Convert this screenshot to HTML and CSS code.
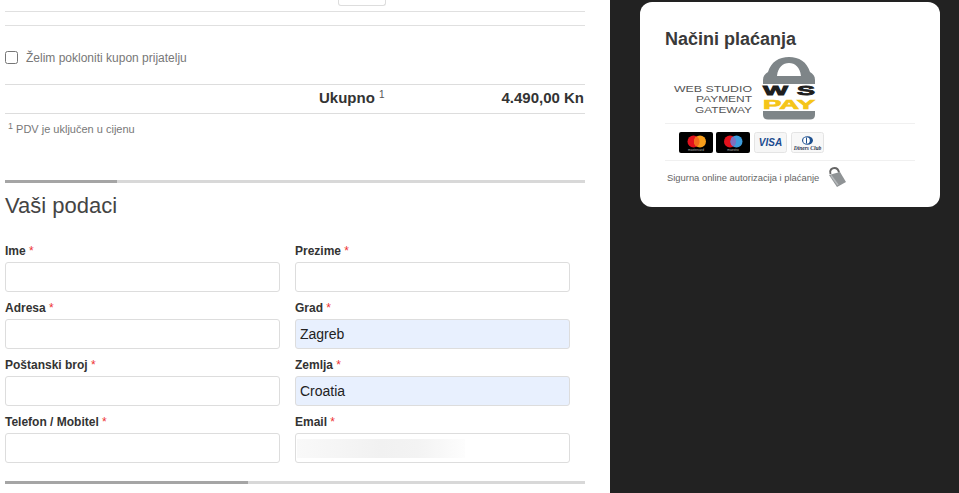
FILE: index.html
```html
<!DOCTYPE html>
<html lang="hr">
<head>
<meta charset="utf-8">
<title>Vaši podaci</title>
<link rel="stylesheet" href="styles.css">
</head>
<body>
<div class="page">
  <main class="main">
    <div class="top-row"><span class="qty-stub"></span></div>
    <div class="spacer-row"></div>
    <label class="gift"><input type="checkbox" class="gift-check"><span>Želim pokloniti kupon prijatelju</span></label>
    <div class="total">
      <span class="total-label">Ukupno <sup class="total-sup">1</sup></span>
      <span class="total-value">4.490,00 Kn</span>
    </div>
    <p class="note"><sup class="note-sup">1</sup> PDV je uključen u cijenu</p>
    <div class="progress"><div class="progress-fill progress-fill-short"></div></div>
    <h2 class="section-title">Vaši podaci</h2>
    <form class="form">
      <div class="field"><label class="field-label">Ime <em>*</em></label><input class="input"></div>
      <div class="field"><label class="field-label">Prezime <em>*</em></label><input class="input"></div>
      <div class="field"><label class="field-label">Adresa <em>*</em></label><input class="input"></div>
      <div class="field"><label class="field-label">Grad <em>*</em></label><input class="input input-auto" value="Zagreb"></div>
      <div class="field"><label class="field-label">Poštanski broj <em>*</em></label><input class="input"></div>
      <div class="field"><label class="field-label">Zemlja <em>*</em></label><input class="input input-auto" value="Croatia"></div>
      <div class="field"><label class="field-label">Telefon / Mobitel <em>*</em></label><input class="input"></div>
      <div class="field"><label class="field-label">Email <em>*</em></label><div class="input-wrap"><input class="input"><span class="redacted"></span></div></div>
    </form>
    <div class="progress progress-bottom"><div class="progress-fill progress-fill-long"></div></div>
  </main>
  <aside class="side">
    <section class="card">
      <h3 class="card-title">Načini plaćanja</h3>
      <div class="logo-row">
        <svg class="logo" width="152" height="67" viewBox="0 0 152 67">
          <g class="logo-words">
            <text x="9" y="37" textLength="78" lengthAdjust="spacingAndGlyphs">WEB STUDIO</text>
            <text x="31" y="47" textLength="56" lengthAdjust="spacingAndGlyphs">PAYMENT</text>
            <text x="30" y="57.500" textLength="57" lengthAdjust="spacingAndGlyphs">GATEWAY</text>
          </g>
          <path fill-rule="evenodd" fill="#7e8588" d="M98 29 L98 25 C98 21 100 19 103 17 C106 7 114 2 124 2 C134 2 142 7 145 17 C148 19 150 21 150 25 L150 29 Z M112 21 L136 21 C135 12 130 8 124 8 C118 8 113 12 112 21 Z"/>
          <path fill="#7e8588" d="M98 56 L150 56 L150 60 C150 63 148 64.500 145 64.500 L103 64.500 C100 64.500 98 63 98 60 Z"/>
          <g class="logo-ws">
            <text x="98" y="40" textLength="25" lengthAdjust="spacingAndGlyphs">W</text>
            <text x="132" y="40" textLength="18" lengthAdjust="spacingAndGlyphs">S</text>
          </g>
          <text class="logo-pay" x="98" y="54" textLength="52" lengthAdjust="spacingAndGlyphs">PAY</text>
        </svg>
      </div>
      <div class="cards-row">
        <svg class="pay-card" width="34" height="21" viewBox="0 0 34 21"><rect width="34" height="21" rx="2" fill="#000"/><circle cx="14.500" cy="9.500" r="6" fill="#e2111c"/><circle cx="21" cy="9.500" r="6" fill="#f79e1b"/><path d="M17.750 4.450a6 6 0 0 1 0 10.100a6 6 0 0 1 0-10.100Z" fill="#f26a1c"/><text class="card-mini" x="17" y="18.500" text-anchor="middle">mastercard</text></svg>
        <svg class="pay-card" width="34" height="21" viewBox="0 0 34 21"><rect width="34" height="21" rx="2" fill="#000"/><circle cx="14" cy="9.500" r="6" fill="#e2111c"/><circle cx="20.500" cy="9.500" r="6" fill="#3d9ddd"/><path d="M17.250 4.450a6 6 0 0 1 0 10.100a6 6 0 0 1 0-10.100Z" fill="#7f6fc0"/><text class="card-mini" x="17" y="18.500" text-anchor="middle">maestro</text></svg>
        <svg class="pay-card pay-card-light" width="33" height="21" viewBox="0 0 33 21"><rect x=".5" y=".5" width="32" height="20" rx="2" fill="#f6f6f6" stroke="#e4e4e4"/><text class="visa" x="16.500" y="14" text-anchor="middle">VISA</text></svg>
        <svg class="pay-card pay-card-light" width="33" height="21" viewBox="0 0 33 21"><rect x=".5" y=".5" width="32" height="20" rx="2" fill="#f8f8f8" stroke="#e4e4e4"/><ellipse cx="16.500" cy="8.500" rx="5.500" ry="4.200" fill="#1c4f8f"/><circle cx="15.500" cy="8.500" r="3.300" fill="#fff"/><rect x="15" y="5.500" width="1" height="6" fill="#1c4f8f"/><text class="diners" x="16.500" y="17.500" text-anchor="middle">Diners Club</text></svg>
      </div>
      <div class="secure-row">
        <span class="secure-text">Sigurna online autorizacija i plaćanje</span>
        <svg class="secure-lock" width="20" height="20" viewBox="0 0 20 20"><path d="M3.500 7 C2 3 5 1 7.500 1 C10 1 11.500 3 12 5.500" fill="none" stroke="#666" stroke-width="2"/><path d="M2 8 L13 5 L19 15 L10 20 Z" fill="#8f9395"/><path d="M4 8.500 L11 18" stroke="#b5b8ba" stroke-width="1.500"/></svg>
      </div>
    </section>
  </aside>
</div>
</body>
</html>
```
FILE: styles.css
```css
* { box-sizing: border-box; }
html, body { margin: 0; height: 100%; overflow: hidden; }
body { font-family: "Liberation Sans", Arial, sans-serif; background: #fff; color: #333; }
.page { display: flex; height: 493px; }
.main { width: 610px; padding: 0 25px 0 5px; flex: none; }
.side { flex: 1; background: #222; padding: 2px 19px 0 30px; }

.top-row { height: 12px; border-bottom: 1px solid #e0e0e0; padding-left: 333px; }
.qty-stub { display: block; width: 48px; height: 6px; background: #fff; border: 1px solid #ddd; border-top: 0; border-radius: 0 0 3px 3px; }
.spacer-row { height: 14px; border-bottom: 1px solid #e0e0e0; }

.gift { display: flex; align-items: center; gap: 8px; height: 59px; border-bottom: 1px solid #ddd; padding-top: 5px; font-size: 12px; color: #777; }
.gift-check { width: 13px; height: 13px; margin: 0; }
.gift span { line-height: 16px; }

.total { display: flex; height: 29px; align-items: center; border-bottom: 1px solid #ddd; padding-bottom: 3px; font-size: 15px; font-weight: 700; color: #333; }
.total-label { margin-left: 314px; white-space: nowrap; }
.total-value { margin-left: auto; margin-right: 1px; }
.total-sup { font-size: 10px; font-weight: 400; color: #555; line-height: 0; vertical-align: 5px; }

.note { margin: 0; height: 66px; padding: 6px 0 0 3px; font-size: 11px; line-height: 18px; color: #777; }
.note-sup { font-size: 9px; line-height: 0; vertical-align: 4px; }

.progress { height: 3px; background: #d8d8d8; }
.progress-fill { height: 3px; background: #a5a5a5; }
.progress-fill-short { width: 112px; }
.progress-fill-long { width: 243px; }
.progress-bottom { margin-top: 18px; }

.section-title { margin: 0; height: 52px; padding-top: 9px; font-size: 22px; font-weight: 400; line-height: 28px; color: #444; }

.form { display: grid; grid-template-columns: 275px 275px; column-gap: 15px; row-gap: 0; }
.field { height: 57px; display: flex; flex-direction: column; justify-content: flex-end; }
.field-label { font-size: 12px; font-weight: 700; line-height: 14px; margin-bottom: 4px; color: #333; }
.field-label em { font-style: normal; font-weight: 400; color: #e33; }
.input { display: block; width: 100%; height: 30px; padding: 0 4px; border: 1px solid #ddd; border-radius: 3px; background: #fff; font: 14px "Liberation Sans", Arial, sans-serif; color: #222; outline: none; }
.input-auto { background: #e8f0fe; }
.input-wrap { position: relative; }
.redacted { position: absolute; left: 2px; top: 6px; width: 168px; height: 19px; background: linear-gradient(90deg, #f9f9f9 0%, #f1f1f1 50%, #f3f3f3 72%, #fdfdfd 100%); }

.card { width: 300px; height: 205px; background: #fff; border-radius: 12px; padding: 0 25px; }
.card-title { margin: 0; padding-top: 26px; height: 53px; font-size: 18px; line-height: 22px; font-weight: 700; color: #3a3a3a; }
.logo-row { height: 69px; border-bottom: 1px solid #f0f0f0; }
.logo { display: block; }
.logo-words { font: 400 9.500px "Liberation Sans", Arial, sans-serif; fill: #555; }
.logo-ws { font: 700 13px "Liberation Sans", Arial, sans-serif; fill: #1e1e1e; stroke: #1e1e1e; stroke-width: .8px; }
.logo-pay { font: 700 12px "Liberation Sans", Arial, sans-serif; fill: #f5c518; stroke: #f5c518; stroke-width: .6px; }
.cards-row { display: flex; gap: 3px; height: 37px; padding: 8px 0 0 14px; border-bottom: 1px solid #f0f0f0; }
.pay-card { display: block; flex: none; }
.pay-card-light { margin-left: 1px; }
.card-mini { font: 3.200px "Liberation Sans", Arial, sans-serif; fill: #bbb; }
.visa { font: italic 700 10px "Liberation Sans", Arial, sans-serif; fill: #1a4b8f; }
.diners { font: italic 700 5.500px "Liberation Serif", serif; fill: #2a3550; }
.secure-row { display: flex; align-items: center; gap: 8px; height: 32px; padding-left: 2px; }
.secure-text { font-size: 9.400px; color: #666; }
.secure-lock { display: block; flex: none; }
```
